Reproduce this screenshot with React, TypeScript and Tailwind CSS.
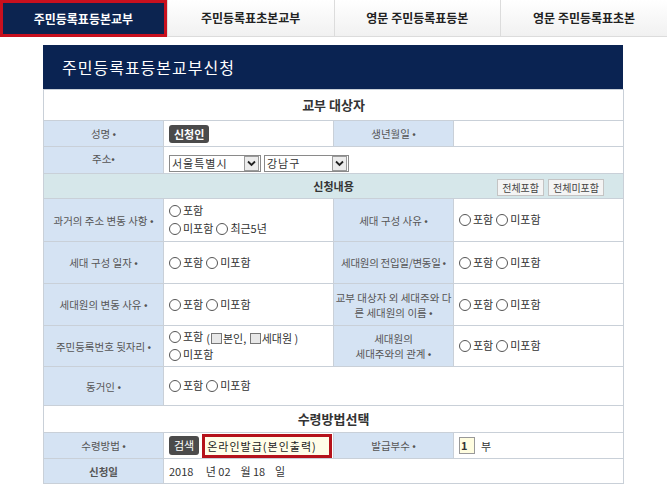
import React from "react";

const font = { fontFamily: '"Noto Sans CJK KR", "Noto Sans", sans-serif' };

const tabs = ["주민등록표등본교부", "주민등록표초본교부", "영문 주민등록표등본", "영문 주민등록표초본"];

function Radio({ label }: { label: string }) {
  return (
    <span className="inline-flex items-center mr-[3px]">
      <span className="inline-block w-[12px] h-[12px] rounded-full border border-[#555] bg-white mr-[2px] mt-[2px]" />
      <span>{label}</span>
    </span>
  );
}

function Box() {
  return <span className="inline-block w-[11px] h-[11px] border border-[#777] bg-[#e8e8e8] align-[-1px] mx-[1px]" />;
}

function Label({ children, className = "" }: { children: React.ReactNode; className?: string }) {
  return (
    <td className={`bg-[#d5e3f3] border border-[#c9d0d8] text-center text-[10.5px] text-[#555] leading-[15px] px-0 ${className}`}>
      {children}
    </td>
  );
}

function Val({ children, colSpan, className = "" }: { children?: React.ReactNode; colSpan?: number; className?: string }) {
  return (
    <td colSpan={colSpan} className={`bg-white border border-[#c9d0d8] text-[11px] text-[#333] leading-[16px] pl-[5px] ${className}`}>
      {children}
    </td>
  );
}

function Select({ value, width }: { value: string; width: string }) {
  return (
    <span className={`inline-flex items-center h-[17px] border border-[#8a8a8a] bg-white ${width}`}>
      <span className="flex-1 pl-[2px] text-[11px] tracking-[1px] text-[#333] leading-[15px]">{value}</span>
      <span className="w-[15px] h-[15px] mr-[1px] border border-[#9a9a9a] bg-[#ececec] flex items-center justify-center">
        <svg width="9" height="7" viewBox="0 0 9 7">
          <path d="M1 1.5 L4.5 5 L8 1.5" stroke="#222" strokeWidth="1.8" fill="none" />
        </svg>
      </span>
    </span>
  );
}

export default function App() {
  return (
    <div className="w-[667px] h-[492px] bg-white overflow-hidden" style={font}>
      <div className="flex h-[37px]">
        {tabs.map((t, i) =>
          i === 0 ? (
            <div key={t} className="w-[167px] h-[37px] bg-[#0c2450] border-[3px] border-[#c8101e] flex items-center justify-center text-white text-[12px] font-bold">
              {t}
            </div>
          ) : (
            <div key={t} className="w-[167px] h-[37px] bg-gradient-to-b from-white to-[#f1f1f1] border-l border-b border-[#dcdcdc] flex items-center justify-center text-[#222] text-[12px] font-bold">
              {t}
            </div>
          )
        )}
      </div>

      <div className="ml-[43px] mt-[8px] w-[580px]">
        <div className="h-[44px] bg-[#0a2352] flex items-center pl-[19px] text-white text-[16px] tracking-[1px]">
          주민등록표등본교부신청
        </div>
        <table className="w-[580px] table-fixed border-collapse">
          <colgroup>
            <col className="w-[120px]" />
            <col className="w-[170px]" />
            <col className="w-[120px]" />
            <col className="w-[170px]" />
          </colgroup>
          <tbody>
            <tr className="h-[31px]">
              <td colSpan={4} className="bg-white border border-[#c9d0d8] text-center text-[13px] font-bold text-[#333]">교부 대상자</td>
            </tr>
            <tr className="h-[26px]">
              <Label>성명 •</Label>
              <Val>
                <span className="inline-block bg-[#4b4b4b] rounded-[3px] text-white text-[11px] font-bold px-[5px] leading-[18px] mt-[1px]">신청인</span>
              </Val>
              <Label>생년월일 •</Label>
              <Val />
            </tr>
            <tr className="h-[27px]">
              <Label className="align-top pt-[4px]">주소•</Label>
              <Val colSpan={3} className="align-bottom pb-[1px]">
                <span className="inline-flex gap-[3px]">
                  <Select value="서울특별시" width="w-[92px]" />
                  <Select value="강남구" width="w-[85px]" />
                </span>
              </Val>
            </tr>
            <tr className="h-[25px]">
              <td colSpan={4} className="bg-[#d6e7ea] border border-[#c9d0d8] relative">
                <div className="text-center text-[11px] font-bold text-[#333]">신청내용</div>
                <div className="absolute right-[19px] top-[5px] flex gap-[4px]">
                  <span className="border border-[#c4c4c4] bg-[#f4f4f4] text-[10px] text-[#444] px-[4px] leading-[15px]">전체포함</span>
                  <span className="border border-[#c4c4c4] bg-[#f4f4f4] text-[10px] text-[#444] px-[4px] leading-[15px]">전체미포함</span>
                </div>
              </td>
            </tr>
            <tr className="h-[43px]">
              <Label>과거의 주소 변동 사항 •</Label>
              <Val>
                <div><Radio label="포함" /></div>
                <div><Radio label="미포함" /><Radio label="최근5년" /></div>
              </Val>
              <Label>세대 구성 사유 •</Label>
              <Val><Radio label="포함" /><Radio label="미포함" /></Val>
            </tr>
            <tr className="h-[42px]">
              <Label>세대 구성 일자 •</Label>
              <Val><Radio label="포함" /><Radio label="미포함" /></Val>
              <Label className="tracking-[-0.3px] whitespace-nowrap">세대원의 전입일/변동일 •</Label>
              <Val><Radio label="포함" /><Radio label="미포함" /></Val>
            </tr>
            <tr className="h-[42px]">
              <Label>세대원의 변동 사유 •</Label>
              <Val><Radio label="포함" /><Radio label="미포함" /></Val>
              <Label>교부 대상자 외 세대주와 다<br />른 세대원의 이름 •</Label>
              <Val><Radio label="포함" /><Radio label="미포함" /></Val>
            </tr>
            <tr className="h-[41px]">
              <Label>주민등록번호 뒷자리 •</Label>
              <Val>
                <div><Radio label="포함" />(<Box />본인, <Box />세대원 )</div>
                <div><Radio label="미포함" /></div>
              </Val>
              <Label>세대원의<br />세대주와의 관계 •</Label>
              <Val><Radio label="포함" /><Radio label="미포함" /></Val>
            </tr>
            <tr className="h-[39px]">
              <Label>동거인 •</Label>
              <Val colSpan={3}><Radio label="포함" /><Radio label="미포함" /></Val>
            </tr>
            <tr className="h-[27px]">
              <td colSpan={4} className="bg-white border border-[#c9d0d8] text-center text-[13px] font-bold text-[#333]">수령방법선택</td>
            </tr>
            <tr className="h-[26px]">
              <Label>수령방법 •</Label>
              <Val>
                <span className="inline-flex items-center gap-[3px] whitespace-nowrap">
                  <span className="bg-[#4b4b4b] rounded-[3px] text-white text-[11px] px-[5px] leading-[19px]">검색</span>
                  <span className="w-[130px] h-[24px] border-[3px] border-[#b5121b] bg-[#fffde8] text-[11px] text-[#222] tracking-[1px] leading-[18px] pl-[2px]">
                    온라인발급(본인출력)
                  </span>
                </span>
              </Val>
              <Label>발급부수 •</Label>
              <Val>
                <span className="inline-flex items-center gap-[6px]">
                  <span className="w-[16px] h-[17px] border border-[#999] bg-[#fffde0] text-[11px] font-bold leading-[15px] pl-[1px]">1</span>
                  <span>부</span>
                </span>
              </Val>
            </tr>
            <tr className="h-[25px]">
              <Label className="font-bold text-[#333]">신청일</Label>
              <Val colSpan={3}>2018&nbsp;&nbsp;&nbsp;&nbsp; 년 02&nbsp;&nbsp;&nbsp; 월 18&nbsp;&nbsp;&nbsp; 일</Val>
            </tr>
          </tbody>
        </table>
      </div>
    </div>
  );
}
